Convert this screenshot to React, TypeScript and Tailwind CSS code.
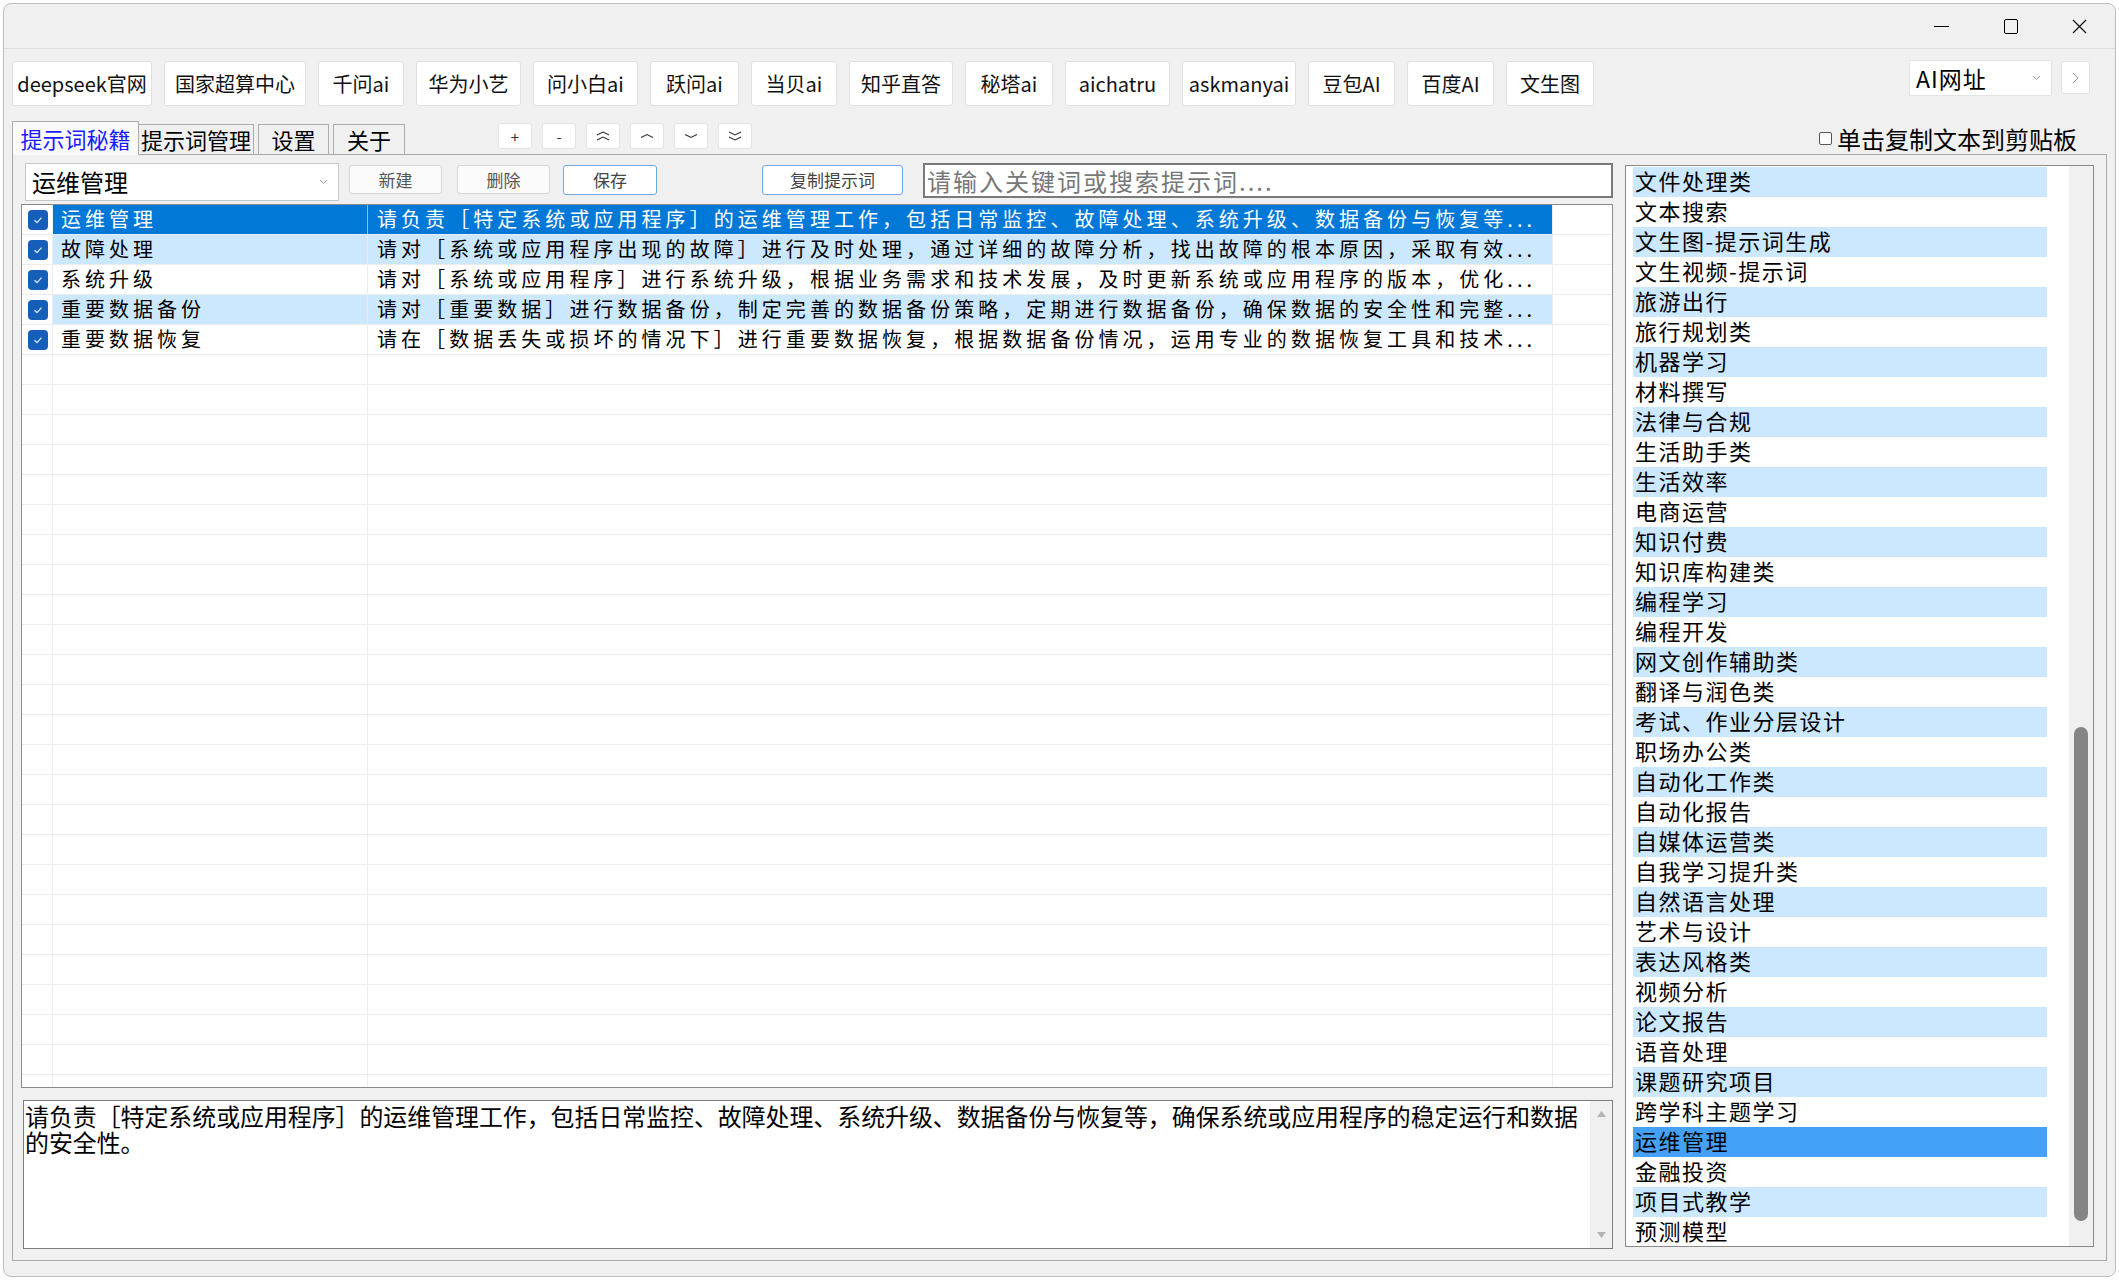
import React from 'react';

const topLinks: { label: string; w: string }[] = [
  { label: 'deepseek官网', w: 'w-[140px]' },
  { label: '国家超算中心', w: 'w-[142px]' },
  { label: '千问ai', w: 'w-[86px]' },
  { label: '华为小艺', w: 'w-[105px]' },
  { label: '问小白ai', w: 'w-[105px]' },
  { label: '跃问ai', w: 'w-[89px]' },
  { label: '当贝ai', w: 'w-[86px]' },
  { label: '知乎直答', w: 'w-[104px]' },
  { label: '秘塔ai', w: 'w-[88px]' },
  { label: 'aichatru', w: 'w-[105px]' },
  { label: 'askmanyai', w: 'w-[114px]' },
  { label: '豆包AI', w: 'w-[87px]' },
  { label: '百度AI', w: 'w-[87px]' },
  { label: '文生图', w: 'w-[88px]' },
];

const prompts = [
  {
    name: '运维管理',
    text: '请负责［特定系统或应用程序］的运维管理工作，包括日常监控、故障处理、系统升级、数据备份与恢复等...',
  },
  {
    name: '故障处理',
    text: '请对［系统或应用程序出现的故障］进行及时处理，通过详细的故障分析，找出故障的根本原因，采取有效...',
  },
  {
    name: '系统升级',
    text: '请对［系统或应用程序］进行系统升级，根据业务需求和技术发展，及时更新系统或应用程序的版本，优化...',
  },
  {
    name: '重要数据备份',
    text: '请对［重要数据］进行数据备份，制定完善的数据备份策略，定期进行数据备份，确保数据的安全性和完整...',
  },
  {
    name: '重要数据恢复',
    text: '请在［数据丢失或损坏的情况下］进行重要数据恢复，根据数据备份情况，运用专业的数据恢复工具和技术...',
  },
];

const categories = [
  '文件处理类', '文本搜索', '文生图-提示词生成', '文生视频-提示词', '旅游出行', '旅行规划类',
  '机器学习', '材料撰写', '法律与合规', '生活助手类', '生活效率', '电商运营', '知识付费',
  '知识库构建类', '编程学习', '编程开发', '网文创作辅助类', '翻译与润色类', '考试、作业分层设计',
  '职场办公类', '自动化工作类', '自动化报告', '自媒体运营类', '自我学习提升类', '自然语言处理',
  '艺术与设计', '表达风格类', '视频分析', '论文报告', '语音处理', '课题研究项目', '跨学科主题学习',
  '运维管理', '金融投资', '项目式教学', '预测模型',
];

function Chevrons({ dir, count }: { dir: 'up' | 'down'; count: 1 | 2 }) {
  const up = dir === 'up';
  const lines = count === 2 ? [2, 7] : [4.5];
  return (
    <svg width="16" height="12" viewBox="0 0 16 12" fill="none" stroke="#333" strokeWidth="1.1">
      {lines.map((y) => (
        <polyline key={y} points={up ? `2,${y + 3} 8,${y} 14,${y + 3}` : `2,${y} 8,${y + 3} 14,${y}`} />
      ))}
    </svg>
  );
}

function Check() {
  return (
    <span className="w-[20px] h-[20px] rounded-[4px] bg-[#155fb8] flex items-center justify-center">
      <svg width="12" height="12" viewBox="0 0 12 12" fill="none" stroke="#cfe3ff" strokeWidth="1.4">
        <polyline points="2.5,6.2 5,8.6 9.5,3.6" />
      </svg>
    </span>
  );
}

export default function App() {
  const emptyRows = Array.from({ length: 26 });

  return (
    <div className="w-[2119px] h-[1280px] bg-white p-[3px] font-['Noto_Sans_CJK_SC','Noto_Sans',sans-serif] text-black overflow-hidden">
      <div className="h-full rounded-[8px] border border-[#bdbdbd] bg-[#f0f0f0] flex flex-col overflow-hidden">
        {/* title bar */}
        <div className="h-[45px] shrink-0 border-b border-[#dedede] flex justify-end items-center pr-[1px]">
          <div className="w-[69px] h-full flex items-center justify-center">
            <span className="w-[15px] h-[1px] bg-black" />
          </div>
          <div className="w-[69px] h-full flex items-center justify-center">
            <span className="w-[14px] h-[15px] border border-black rounded-[2px]" />
          </div>
          <div className="w-[69px] h-full flex items-center justify-center">
            <svg width="15" height="15" viewBox="0 0 15 15" stroke="#000" strokeWidth="1.1">
              <line x1="1" y1="1" x2="14" y2="14" />
              <line x1="14" y1="1" x2="1" y2="14" />
            </svg>
          </div>
        </div>

        {/* quick links */}
        <div className="mt-[12px] h-[45px] shrink-0 flex items-start pl-[8px] pr-[25px]">
          <div className="flex gap-[12px]">
            {topLinks.map((l) => (
              <button
                key={l.label}
                className={`${l.w} h-[45px] bg-white border border-[#e0e0e0] rounded-[3px] text-[20px] text-[#111] whitespace-nowrap flex items-center justify-center`}
              >
                {l.label}
              </button>
            ))}
          </div>
          <div className="ml-auto flex items-start gap-[9px]">
            <div className="-mt-[1px] w-[143px] h-[36px] bg-white border border-[#e4e4e4] flex items-center justify-between pl-[6px] pr-[10px]">
              <span className="text-[23px] leading-none tracking-[1px]">AI网址</span>
              <svg width="9" height="6" viewBox="0 0 9 6" fill="none" stroke="#999" strokeWidth="1">
                <polyline points="1,1 4.5,4.5 8,1" />
              </svg>
            </div>
            <div className="w-[29px] h-[33px] bg-white border border-[#e2e2e2] rounded-[3px] flex items-center justify-center">
              <svg width="7" height="12" viewBox="0 0 7 12" fill="none" stroke="#999" strokeWidth="1">
                <polyline points="1,1 6,6 1,11" />
              </svg>
            </div>
          </div>
        </div>

        {/* tabs row */}
        <div className="mt-[15px] h-[33px] shrink-0 flex items-end pl-[8px] pr-[38px] relative z-10">
          <div className="h-[34px] -mb-[1px] w-[127px] bg-[#f9f9f9] border border-b-0 border-[#acacac] flex items-center justify-center text-[22px] text-[#1a1aff]">
            提示词秘籍
          </div>
          <div className="h-[30px] w-[115px] border border-b-0 border-l-0 border-[#acacac] flex items-center justify-center text-[22px]">
            提示词管理
          </div>
          <div className="h-[30px] w-[71px] ml-[4px] border border-b-0 border-[#acacac] flex items-center justify-center text-[22px]">
            设置
          </div>
          <div className="h-[30px] w-[72px] ml-[4px] border border-b-0 border-[#acacac] flex items-center justify-center text-[22px]">
            关于
          </div>

          <div className="ml-[93px] mb-[5px] flex gap-[10px]">
            <button className="w-[34px] h-[26px] bg-white border border-[#e4e4e4] rounded-[3px] text-[15px] leading-none text-[#333]">+</button>
            <button className="w-[34px] h-[26px] bg-white border border-[#e4e4e4] rounded-[3px] text-[15px] leading-none text-[#333]">-</button>
            <button className="w-[34px] h-[26px] bg-white border border-[#e4e4e4] rounded-[3px] flex items-center justify-center">
              <Chevrons dir="up" count={2} />
            </button>
            <button className="w-[34px] h-[26px] bg-white border border-[#e4e4e4] rounded-[3px] flex items-center justify-center">
              <Chevrons dir="up" count={1} />
            </button>
            <button className="w-[34px] h-[26px] bg-white border border-[#e4e4e4] rounded-[3px] flex items-center justify-center">
              <Chevrons dir="down" count={1} />
            </button>
            <button className="w-[34px] h-[26px] bg-white border border-[#e4e4e4] rounded-[3px] flex items-center justify-center">
              <Chevrons dir="down" count={2} />
            </button>
          </div>

          <label className="ml-auto self-center flex items-center gap-[5px] pt-[2px]">
            <span className="w-[13px] h-[13px] border border-[#555] rounded-[2px] bg-white" />
            <span className="text-[24px] leading-none">单击复制文本到剪贴板</span>
          </label>
        </div>

        {/* tab panel */}
        <div className="ml-[8px] mr-[8px] h-[1107px] shrink-0 border border-[#a9a9a9] bg-[#f0f0f0] flex pl-[8px] pr-[12px] pt-[8px]">
          {/* left column */}
          <div className="w-[1592px] flex flex-col">
            {/* toolbar */}
            <div className="h-[38px] flex items-start">
              <div className="ml-[4px] w-[314px] h-[38px] bg-white border border-[#c8c8c8] flex items-center justify-between pl-[6px] pr-[10px]">
                <span className="text-[24px] leading-none">运维管理</span>
                <svg width="9" height="6" viewBox="0 0 9 6" fill="none" stroke="#999" strokeWidth="1">
                  <polyline points="1,1 4.5,4.5 8,1" />
                </svg>
              </div>
              <button className="ml-[10px] mt-[2px] w-[93px] h-[29px] bg-[#fbfbfb] border border-[#d6d6d6] rounded-[3px] text-[17px] text-[#555]">新建</button>
              <button className="ml-[15px] mt-[2px] w-[93px] h-[29px] bg-[#fbfbfb] border border-[#d6d6d6] rounded-[3px] text-[17px] text-[#555]">删除</button>
              <button className="ml-[13px] mt-[2px] w-[94px] h-[30px] bg-white border border-[#6fa8e6] rounded-[3px] text-[17px] text-[#444]">保存</button>
              <button className="ml-[105px] mt-[2px] w-[141px] h-[30px] bg-white border border-[#6fa8e6] rounded-[3px] text-[17px] text-[#444]">复制提示词</button>
              <div className="ml-[20px] flex-1 h-[35px] bg-white border-2 border-[#7a7a7a] flex items-center pl-[2px]">
                <span className="text-[24px] leading-none text-[#777] tracking-[2px] whitespace-nowrap">请输入关键词或搜索提示词....</span>
              </div>
            </div>

            {/* table */}
            <div className="mt-[3px] h-[884px] bg-white border border-[#8a8a8a] overflow-hidden">
              {prompts.map((p, i) => {
                const selected = i === 0;
                const stripe = i % 2 === 1;
                const cellBg = selected ? 'bg-[#0078d7] text-white' : stripe ? 'bg-[#cce8ff]' : '';
                return (
                  <div key={p.name} className="h-[30px] flex border-b border-[#ececec]">
                    <div className="w-[31px] shrink-0 border-r border-[#ececec] flex items-center justify-center pl-[1px]">
                      <Check />
                    </div>
                    <div className={`w-[315px] shrink-0 border-r ${selected ? 'border-[#8fbfee]' : 'border-[#ececec]'} ${cellBg} pl-[8px] text-[20px] leading-[28px] tracking-[4px] whitespace-nowrap overflow-hidden`}>
                      {p.name}
                    </div>
                    <div className={`w-[1185px] shrink-0 border-r border-[#ececec] ${cellBg} pl-[9px] text-[20px] leading-[28px] tracking-[4.05px] whitespace-nowrap overflow-hidden`}>
                      {p.text}
                    </div>
                    <div className="flex-1" />
                  </div>
                );
              })}
              {emptyRows.map((_, i) => (
                <div key={i} className="h-[30px] flex border-b border-[#ececec]">
                  <div className="w-[31px] shrink-0 border-r border-[#ececec]" />
                  <div className="w-[315px] shrink-0 border-r border-[#ececec]" />
                  <div className="w-[1185px] shrink-0 border-r border-[#ececec]" />
                  <div className="flex-1" />
                </div>
              ))}
            </div>

            {/* detail text */}
            <div className="mt-[12px] h-[149px] ml-[2px] bg-white border border-[#7d7d7d] flex">
              <div className="flex-1 pl-[1px] pt-[2px] text-[23.9px] leading-[26px] text-black">
                请负责［特定系统或应用程序］的运维管理工作，包括日常监控、故障处理、系统升级、数据备份与恢复等，确保系统或应用程序的稳定运行和数据的安全性。
              </div>
              <div className="w-[22px] bg-[#f0f0f0] flex flex-col items-center justify-between py-[10px]">
                <svg width="9" height="6" viewBox="0 0 9 6"><polygon points="4.5,0 9,6 0,6" fill="#b4b4b4" /></svg>
                <svg width="9" height="6" viewBox="0 0 9 6"><polygon points="0,0 9,0 4.5,6" fill="#b4b4b4" /></svg>
              </div>
            </div>
          </div>

          {/* category list */}
          <div className="ml-[12px] mt-[2px] w-[469px] h-[1082px] bg-white border border-[#8a8a8a] flex">
            <div className="flex-1 pl-[7px] pt-[1px]">
              {categories.map((c, i) => {
                const selected = c === '运维管理';
                const bg = selected ? 'bg-[#45a1f7]' : i % 2 === 0 ? 'bg-[#cce8ff]' : '';
                return (
                  <div key={c} className={`w-[414px] h-[30px] ${bg} pl-[2px] text-[22px] leading-[27px] tracking-[1.5px] whitespace-nowrap`}>
                    {c}
                  </div>
                );
              })}
            </div>
            <div className="w-[24px] bg-[#f0f0f0] pt-[561px] pl-[5px]">
              <div className="w-[14px] h-[494px] rounded-[7px] bg-[#858585]" />
            </div>
          </div>
        </div>
      </div>
    </div>
  );
}
